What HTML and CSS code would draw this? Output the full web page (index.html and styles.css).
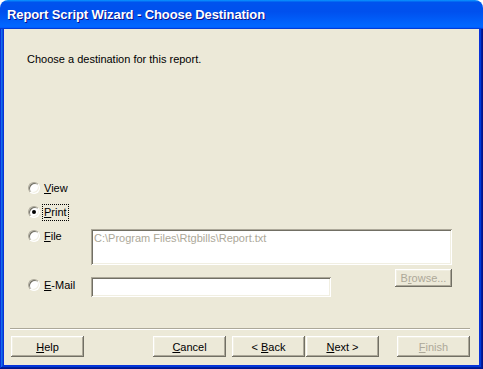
FILE: index.html
```html
<!DOCTYPE html>
<html lang="en">
<head>
	<meta charset="UTF-8">
	<title>Report Script Wizard - Choose Destination</title>
	<link rel="stylesheet" href="styles.css">
</head>
<body>
	<div class="window">
		<div class="title-bar">
			<span class="title">Report Script Wizard - Choose Destination</span>
		</div>
		<div class="frame">
			<div class="client">
				<p class="prompt">Choose a destination for this report.</p>

				<div class="options">
					<label class="opt opt-view"><span class="radio"></span><span class="caption"><u>V</u>iew</span></label>
					<label class="opt opt-print"><span class="radio checked"></span><span class="caption focus"><u>P</u>rint</span></label>
					<label class="opt opt-file"><span class="radio"></span><span class="caption"><u>F</u>ile</span></label>
					<div class="textbox file-box disabled">C:\Program Files\Rtgbills\Report.txt</div>
					<label class="opt opt-mail"><span class="radio"></span><span class="caption"><u>E</u>-Mail</span></label>
					<div class="textbox mail-box"></div>
					<button class="btn browse" disabled>B<u>r</u>owse...</button>
				</div>

				<div class="divider"></div>

				<div class="buttons">
					<button class="btn"><u>H</u>elp</button>
					<button class="btn cancel"><u>C</u>ancel</button>
					<button class="btn back">&lt; <u>B</u>ack</button>
					<button class="btn next"><u>N</u>ext &gt;</button>
					<button class="btn finish" disabled><u>F</u>inish</button>
				</div>
			</div>
		</div>
	</div>
</body>
</html>
```

FILE: styles.css
```css
/*--reset--*/
body {
	margin: 0;
	background: #fff;
}
p {
	margin: 0;
}

/**
 * window chrome
 */
.window {
	width: 483px;
	height: 369px;
	display: flex;
	flex-direction: column;
	font: 11px/13px "Liberation Sans", Arial, sans-serif;
	color: #000;
}
.title-bar {
	height: 29px;
	flex: none;
	display: flex;
	align-items: center;
	padding: 0 0 1px 7px;
	box-sizing: border-box;
	border-radius: 8px 8px 0 0;
	background: linear-gradient(180deg, #0997ff, #0053ee 8%, #0050ee 40%, #06f 88%, #06f 93%, #005bff 95%, #003dd7 96%, #003dd7);
}
.title {
	color: #fff;
	font: bold 13px "Liberation Sans", Arial, sans-serif;
	letter-spacing: -0.1px;
	text-shadow: 1px 1px #0f1089;
}
.frame {
	flex: 1;
	display: flex;
	padding: 0 4px 4px;
	background: #0831d9;
	box-shadow: inset -1px -1px #00138c, inset 1px 0 #0831d9, inset -2px -2px #001ea0, inset 2px 0 #166aee, inset -3px -3px #003bda, inset 3px 0 #0855dd;
}
.client {
	flex: 1;
	display: flex;
	flex-direction: column;
	background: #ece9d8;
}

/**
 * content
 */
.prompt {
	margin: 24px 0 0 23px;
}
.options {
	display: grid;
	grid-template-columns: 63px 240px 121px;
	grid-template-rows: 24px 24px 41px auto;
	margin: 114px 0 0 24px;
}
.opt {
	display: flex;
	align-items: center;
	gap: 4px;
	height: 16px;
	align-self: start;
	grid-column: 1;
}
.opt-mail {
	margin-top: 8px;
}
.radio {
	position: relative;
	width: 12px;
	height: 12px;
	box-sizing: border-box;
	border-radius: 50%;
	background: #fff;
	border: 1px solid;
	border-color: #aca899 #fff #fff #aca899;
	box-shadow: inset 1px 1px #716f64, inset -1px -1px #f1efe2;
}
.radio.checked::after {
	content: "";
	position: absolute;
	left: 3px;
	top: 3px;
	width: 4px;
	height: 4px;
	border-radius: 50%;
	background: #000;
}
.caption.focus {
	outline: 1px dotted #000;
	padding: 1px 1px;
	margin-left: -1px;
}

.textbox {
	box-sizing: border-box;
	background: #fff;
	padding: 3px 3px;
	box-shadow: inset 1px 1px #aca899, inset -1px -1px #fff, inset 2px 2px #716f64, inset -2px -2px #f1efe2;
}
.textbox.disabled {
	color: #aca899;
}
.file-box {
	grid-column: 2 / 4;
	grid-row: 3;
	align-self: start;
	height: 36px;
	margin-top: 1px;
}
.mail-box {
	grid-column: 2;
	grid-row: 4;
	height: 20px;
	margin-top: 8px;
}

/**
 * buttons
 */
.btn {
	width: 73px;
	height: 21px;
	padding: 0;
	border: none;
	background: #ece9d8;
	font: 11px "Liberation Sans", Arial, sans-serif;
	color: #000;
	box-shadow: inset -1px -1px #716f64, inset 1px 1px #fff, inset -2px -2px #aca899, inset 2px 2px #f1efe2;
}
.btn:disabled {
	color: #aca899;
}
.btn.browse {
	grid-column: 3;
	grid-row: 4;
	justify-self: end;
	align-self: start;
	width: 57px;
	height: 18px;
}
.divider {
	margin: auto 9px 0 6px;
	height: 0;
	border-top: 1px solid #aca899;
	border-bottom: 1px solid #fff;
}
.buttons {
	display: flex;
	padding: 6px 9px 8px 7px;
}
.cancel {
	margin-left: auto;
}
.back {
	margin-left: 6px;
}
.next {
	margin-left: 1px;
}
.finish {
	margin-left: 18px;
}
```
